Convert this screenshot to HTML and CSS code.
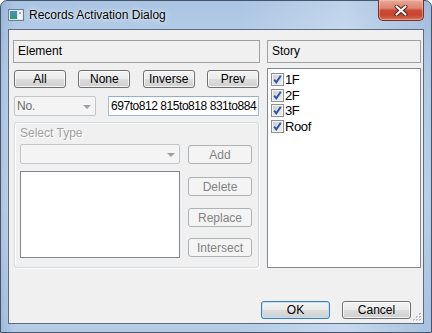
FILE: index.html
```html
<!DOCTYPE html>
<html>
<head>
<meta charset="utf-8">
<link rel="stylesheet" href="styles.css">
</head>
<body>
<div class="window">
  <div class="titlebar">
    <svg class="appicon" width="16" height="12" viewBox="0 0 16 12">
      <defs>
        <linearGradient id="ig" x1="0" y1="0" x2="0" y2="1">
          <stop offset="0" stop-color="#4a8fd0"/>
          <stop offset="1" stop-color="#2f9a6a"/>
        </linearGradient>
      </defs>
      <rect x="0.5" y="0.5" width="15" height="11" fill="#dfe6ee" stroke="#6f7c8c"/>
      <rect x="2" y="2" width="7" height="8" fill="url(#ig)"/>
      <rect x="10" y="2" width="4" height="8" fill="#f4f7fa"/>
      <rect x="11" y="3" width="2" height="2" fill="#9fb0c2"/>
    </svg>
    <span class="title">Records Activation Dialog</span>
    <div class="close">
      <svg width="14" height="11" viewBox="0 0 14 11">
        <path d="M2.5 1.5 L11.5 9.5 M11.5 1.5 L2.5 9.5" stroke="#5a1a14" stroke-width="4" stroke-linecap="round"/>
        <path d="M2.5 1.5 L11.5 9.5 M11.5 1.5 L2.5 9.5" stroke="#ffffff" stroke-width="2.2" stroke-linecap="round"/>
      </svg>
    </div>
  </div>
  <div class="client">
    <div class="main">
      <div class="left">
        <div class="hdr">Element</div>
        <div class="btnrow">
          <div class="btn w52">All</div>
          <div class="btn w52">None</div>
          <div class="btn w52">Inverse</div>
          <div class="btn w52">Prev</div>
        </div>
        <div class="row3">
          <div class="combo dis w82"><span class="ctext">No.</span><span class="arrow"></span></div>
          <div class="edit">697to812 815to818 831to884</div>
        </div>
        <div class="group">
          <div class="glabel">Select Type</div>
          <div class="grow1">
            <div class="combo dis w160"><span class="ctext"></span><span class="arrow"></span></div>
            <div class="btn dbtn add">Add</div>
          </div>
          <div class="grow2">
            <div class="glist"></div>
            <div class="btncol">
              <div class="btn dbtn b-del">Delete</div>
              <div class="btn dbtn b-rep">Replace</div>
              <div class="btn dbtn b-int">Intersect</div>
            </div>
          </div>
        </div>
      </div>
      <div class="right">
        <div class="hdr">Story</div>
        <div class="slist">
          <div class="item"><span class="cb"></span><span class="itext">1F</span></div>
          <div class="item"><span class="cb"></span><span class="itext">2F</span></div>
          <div class="item"><span class="cb"></span><span class="itext">3F</span></div>
          <div class="item"><span class="cb"></span><span class="itext">Roof</span></div>
        </div>
      </div>
    </div>
    <div class="footer">
      <div class="btn okbtn w69">OK</div>
      <div class="btn w69">Cancel</div>
    </div>
    <svg class="grip" width="10" height="10" viewBox="0 0 10 10">
      <g fill="#b8bcc2">
        <rect x="7" y="1" width="2" height="2"/>
        <rect x="4" y="4" width="2" height="2"/>
        <rect x="7" y="4" width="2" height="2"/>
        <rect x="1" y="7" width="2" height="2"/>
        <rect x="4" y="7" width="2" height="2"/>
        <rect x="7" y="7" width="2" height="2"/>
      </g>
      <g fill="#ffffff">
        <rect x="8" y="2" width="1" height="1"/>
        <rect x="5" y="5" width="1" height="1"/>
        <rect x="8" y="5" width="1" height="1"/>
        <rect x="2" y="8" width="1" height="1"/>
        <rect x="5" y="8" width="1" height="1"/>
        <rect x="8" y="8" width="1" height="1"/>
      </g>
    </svg>
  </div>
</div>
</body>
</html>
```
FILE: styles.css
```css
* { box-sizing: border-box; }
html, body { margin: 0; padding: 0; }
body {
  width: 432px;
  height: 333px;
  overflow: hidden;
  background: #ffffff;
  font-family: "Liberation Sans", Arial, sans-serif;
  font-size: 12px;
  color: #000;
}
.window {
  width: 432px;
  height: 333px;
  display: flex;
  flex-direction: column;
  border: 1px solid #44556c;
  border-radius: 7px 7px 0 0;
  background:
    linear-gradient(to right, rgba(120,150,190,0.35) 0, rgba(255,255,255,0) 3%, rgba(255,255,255,0) 55%, rgba(255,255,255,0.25) 80%, rgba(120,150,190,0.2) 100%),
    linear-gradient(to bottom, #a9c4e3 0, #bed4ec 20%, #c9dcf0 60%, #b3cbe6 100%);
}
.titlebar {
  height: 28px;
  display: flex;
  align-items: center;
  padding-left: 7px;
}
.appicon { display: block; }
.title {
  margin-left: 5px;
  font-size: 12px;
  color: #000;
  text-shadow: 0 0 6px rgba(255,255,255,0.9), 0 0 2px rgba(255,255,255,0.8);
}
.close {
  margin-left: auto;
  margin-right: 7px;
  margin-top: -1px;
  align-self: flex-start;
  width: 46px;
  height: 21px;
  border: 1px solid #7e2b22;
  border-top: none;
  border-radius: 0 0 5px 5px;
  background: linear-gradient(to bottom, #e9a996 0, #dd8574 40%, #c94b35 52%, #c7442e 75%, #d9715a 100%);
  box-shadow: inset 0 0 0 1px rgba(255,210,200,0.45);
  display: flex;
  align-items: center;
  justify-content: center;
}
.close svg { display: block; }
.client {
  position: relative;
  margin: 0 7px;
  height: 295px;
  border: 1px solid #5c6b80;
  background: #f0f0f0;
  padding: 10px 2px 0 4px;
  display: flex;
  flex-direction: column;
}
.main { display: flex; gap: 7px; }
.left { width: 247px; display: flex; flex-direction: column; }
.right { width: 154px; display: flex; flex-direction: column; }
.hdr {
  height: 23px;
  border: 1px solid #a0a0a0;
  padding-left: 4px;
  line-height: 21px;
  font-size: 12px;
}
.btn {
  height: 18px;
  border: 1px solid #707070;
  border-radius: 3px;
  background: linear-gradient(to bottom, #f2f2f2 0, #ebebeb 50%, #dddddd 51%, #cfcfcf 100%);
  box-shadow: inset 0 0 0 1px rgba(255,255,255,0.75);
  display: flex;
  align-items: center;
  justify-content: center;
  font-size: 12px;
  color: #000;
}
.w52 { width: 52px; }
.w69 { width: 69px; }
.btnrow {
  margin-top: 7px;
  height: 18px;
  display: flex;
  justify-content: space-between;
  padding: 0 1px;
}
.row3 {
  margin-top: 8px;
  height: 20px;
  display: flex;
  justify-content: space-between;
  padding: 0 1px;
}
.combo {
  height: 20px;
  border: 1px solid #c2c5c9;
  border-radius: 2px;
  background: #f4f4f4;
  display: flex;
  align-items: center;
  padding: 0 4px 0 2px;
}
.w82 { width: 82px; }
.w160 { width: 160px; }
.ctext { flex: 1; color: #6d6d6d; font-size: 12px; letter-spacing: -0.2px; }
.arrow {
  width: 0;
  height: 0;
  border-left: 4px solid transparent;
  border-right: 4px solid transparent;
  border-top: 4px solid #a0a0a0;
  margin-top: 1px;
}
.edit {
  width: 151px;
  height: 20px;
  border: 1px solid #a3bcd9;
  border-top-color: #8eaed2;
  border-radius: 1px;
  background: #fff;
  padding-left: 2px;
  line-height: 18px;
  font-size: 12px;
  letter-spacing: -0.45px;
  white-space: nowrap;
  overflow: hidden;
}
.group {
  margin: 6px 1px 0;
  height: 146px;
  border: 1px solid #d3dbe1;
  border-radius: 3px;
  box-shadow: inset 1px 1px 0 #ffffff, 1px 1px 0 #ffffff;
  padding: 2px 0 0 5px;
}
.glabel {
  height: 17px;
  line-height: 17px;
  color: #a2a2a2;
  font-size: 12px;
  text-shadow: 1px 1px 0 #ffffff;
}
.grow1 { display: flex; gap: 8px; margin-top: 2px; align-items: flex-start; }
.dbtn {
  width: 64px;
  height: 19px;
  border-color: #adb2b5;
  background: #f4f4f4;
  box-shadow: none;
  color: #838383;
}
.add { margin-top: 1px; }
.grow2 { display: flex; gap: 8px; margin-top: 7px; }
.glist {
  width: 160px;
  height: 87px;
  border: 1px solid #828790;
  background: #fff;
}
.btncol { display: flex; flex-direction: column; }
.b-del { margin-top: 6px; }
.b-rep { margin-top: 12px; }
.b-int { margin-top: 11px; }
.slist {
  margin-top: 5px;
  height: 200px;
  border: 1px solid #828790;
  background: #fff;
  padding: 4px 0 0 3px;
}
.item {
  height: 15.67px;
  display: flex;
  align-items: flex-start;
}
.cb {
  width: 13px;
  height: 13px;
  flex: none;
  border: 1px solid #8e8f8f;
  background:
    url("data:image/svg+xml;utf8,<svg xmlns='http://www.w3.org/2000/svg' width='11' height='11' viewBox='0 0 11 11'><path d='M2.2 5.6 L4.3 8.3 L8.8 1.8' fill='none' stroke='%233153a0' stroke-width='1.9'/></svg>") center / 11px 11px no-repeat,
    linear-gradient(to bottom right, #c9cdd3, #f1f2f4);
  box-shadow: inset 0 0 0 1px #f4f4f4;
}
.itext {
  margin-left: 1px;
  font-size: 13px;
  line-height: 13px;
  letter-spacing: -0.4px;
  margin-top: 0;
}
.footer {
  margin-top: 33px;
  display: flex;
  justify-content: flex-end;
  gap: 12px;
  padding-right: 10px;
}
.okbtn {
  border-color: #3c7fb1;
  box-shadow: inset 0 0 0 1px #bfe2f7;
}
.grip {
  position: absolute;
  right: 1px;
  bottom: 1px;
  display: block;
}
```
